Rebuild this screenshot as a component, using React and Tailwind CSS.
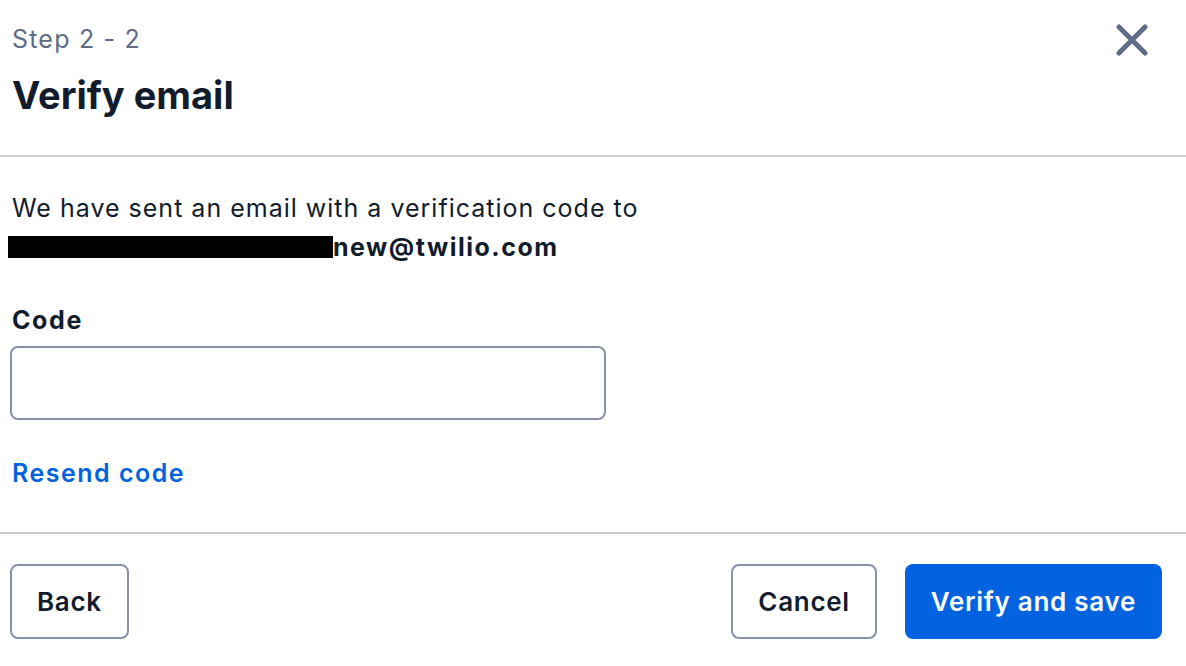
export default function App() {
  return (
    <div className="w-[1186px] h-[666px] bg-white text-[#121C2D] overflow-hidden" style={{ fontFamily: 'Inter, "Noto Sans", sans-serif' }}>
      <div className="flex justify-between items-start pl-3 pr-[38px] pt-[21px] pb-[35px] border-b-2 border-[#CACDD8]">
        <div>
          <div className="text-[25px] leading-[36px] tracking-[1.2px] text-[#606B85]">Step 2 - 2</div>
          <h1 className="text-[38px] leading-[50px] font-bold mt-[13px]">Verify email</h1>
        </div>
        <button className="mt-[3px] text-[#606B85]" aria-label="Close">
          <svg width="32" height="32" viewBox="0 0 32 32" fill="none">
            <path d="M3 3L29 29M29 3L3 29" stroke="currentColor" strokeWidth="5" strokeLinecap="round" />
          </svg>
        </button>
      </div>
      <div className="pl-3 pt-[32px] pb-[41px] border-b-2 border-[#CACDD8]">
        <p className="text-[25px] leading-[39px] tracking-[1px]">
          We have sent an email with a verification code to
          <br />
          <span className="inline-block align-middle -ml-1 w-[325px] h-[22px] bg-black relative -top-[2px]"></span>
          <span className="font-bold tracking-[1.5px]">new@twilio.com</span>
        </p>
        <label className="block mt-[35px] text-[25px] leading-[36px] tracking-[1.6px] font-bold">Code</label>
        <input className="block mt-2 -ml-[2px] w-[596px] h-[74px] rounded-lg border-2 border-[#8891AA] bg-white px-3 text-[24px] outline-none" />
        <button className="block mt-[35px] text-[25px] leading-[36px] tracking-[1.5px] font-semibold text-[#0263E0]">Resend code</button>
      </div>
      <div className="flex justify-between items-center pl-[10px] pr-6 pt-[30px]">
        <button className="h-[75px] px-[25px] rounded-lg border-2 border-[#8891AA] bg-white text-[26px] tracking-[0.7px] font-semibold">Back</button>
        <div className="flex gap-7">
          <button className="h-[75px] px-[25px] rounded-lg border-2 border-[#8891AA] bg-white text-[26px] tracking-[0.7px] font-semibold">Cancel</button>
          <button className="h-[75px] px-[26px] rounded-lg bg-[#0263E0] text-white text-[26px] tracking-[0.7px] font-semibold">Verify and save</button>
        </div>
      </div>
    </div>
  );
}
